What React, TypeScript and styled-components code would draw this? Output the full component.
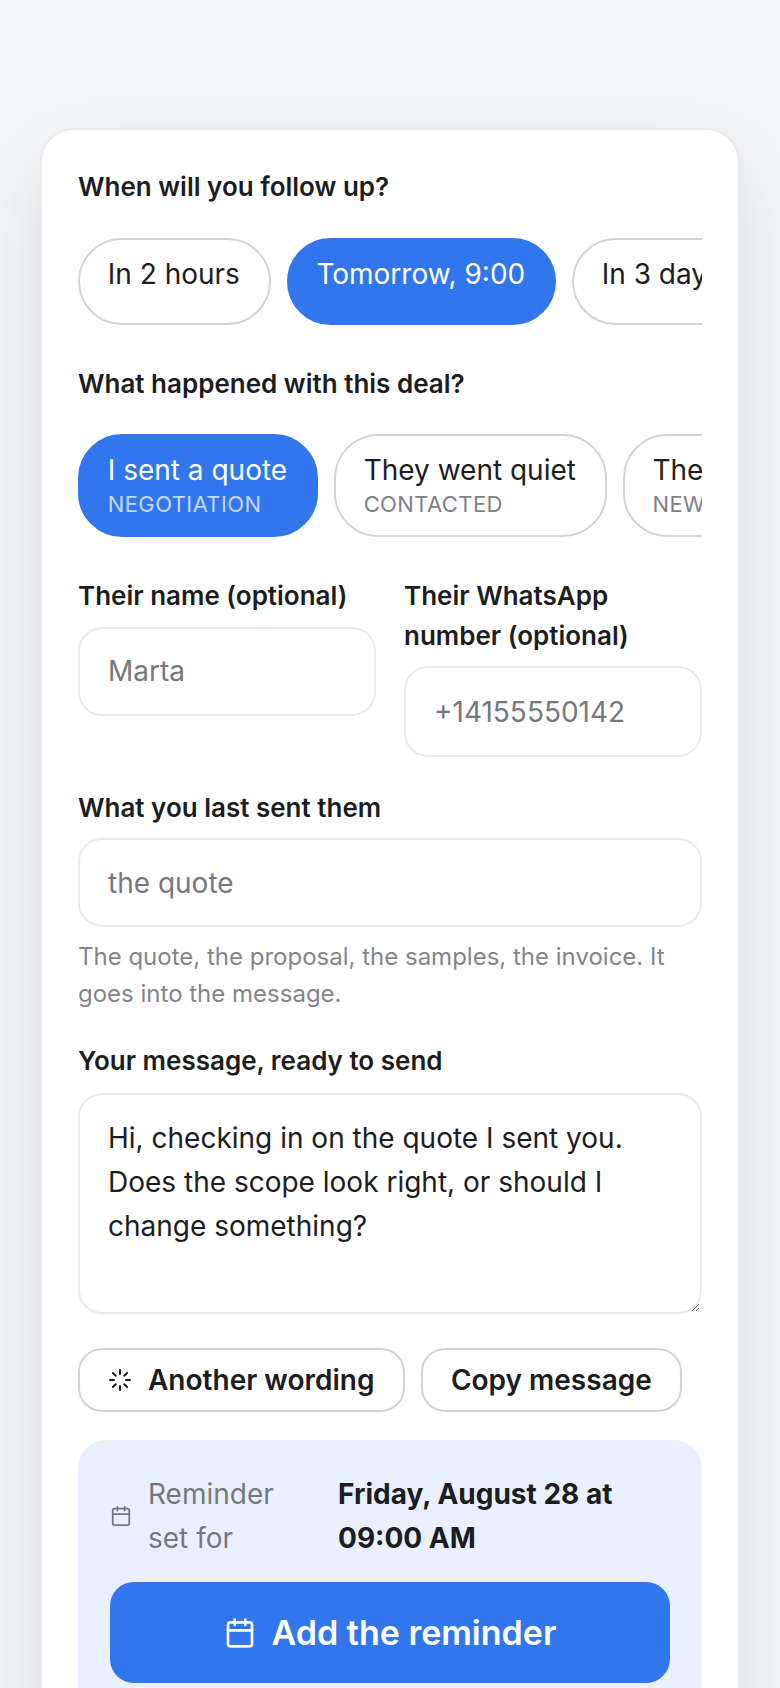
import React from "react";
import styled, { createGlobalStyle } from "styled-components";

const Global = createGlobalStyle`
  html, body { margin: 0; padding: 0; }
  body {
    height: 1688px; overflow: hidden;
    background: #f6f7f9;
    font-family: Inter, "Liberation Sans", sans-serif;
    color: #1c1d20;
    -webkit-font-smoothing: antialiased;
  }
  * { box-sizing: border-box; }
`;

const Page = styled.main`
  height: 1688px;
  overflow: hidden;
  padding: 128px 40px 0;
`;

const Card = styled.section`
  background: #fff;
  border: 2px solid #e9eaee;
  border-radius: 34px;
  padding: 37px 36px 0;
  height: 1700px;
  box-shadow: 0 32px 80px rgba(28, 29, 32, 0.14);
`;

const Field = styled.div`
  display: flex;
  flex-direction: column;
  min-width: 0;
`;

const Label = styled.label`
  font-size: 26px;
  font-weight: 600;
  line-height: 39.5px;
  color: #1c1d20;
  margin-bottom: 11px;
`;

const Chips = styled.div`
  display: flex;
  gap: 16px;
  overflow: hidden;
  margin: 20px 0 39px;
`;

const Chip = styled.button<{ $on?: boolean }>`
  flex: none;
  display: flex;
  flex-direction: column;
  align-items: flex-start;
  min-height: 87px;
  padding: 15px 28.75px 16px 27.75px;
  border-radius: 44px;
  border: 2px solid ${(p) => (p.$on ? "#3276ee" : "#d2d3d8")};
  background: ${(p) => (p.$on ? "#3276ee" : "#fff")};
  color: ${(p) => (p.$on ? "#fff" : "#1c1d20")};
  font: 400 28px/39px Inter, sans-serif;
`;

const ChipSub = styled.span<{ $on?: boolean }>`
  font-size: 22px;
  line-height: 29px;
  letter-spacing: 0.4px;
  color: ${(p) => (p.$on ? "rgba(255,255,255,0.72)" : "#808186")};
`;

const TwoCols = styled.div`
  display: grid;
  grid-template-columns: 1fr 1fr;
  gap: 28px;
  align-items: start;
  margin-bottom: 30.5px;
`;

const Input = styled.input<{ $tall?: boolean }>`
  width: 100%;
  height: ${(p) => (p.$tall ? "91px" : "89px")};
  padding: 0 28px;
  border: 2px solid #e9eaee;
  border-radius: 24px;
  background: #fff;
  font: 400 28px Inter, sans-serif;
  color: #1c1d20;
  outline: none;
  &::placeholder { color: #77787d; opacity: 1; }
`;

const Hint = styled.p`
  margin: 11px 0 29px;
  font-size: 24px;
  line-height: 37px;
  color: #84858a;
`;

const Message = styled.textarea`
  display: block;
  width: 100%;
  height: 221px;
  margin-top: 1.5px;
  padding: 20.5px 28px;
  border: 2px solid #e9eaee;
  border-radius: 24px;
  background: #fff;
  font: 400 28px/44px Inter, sans-serif;
  color: #1c1d20;
  outline: none;
`;

const Actions = styled.div`
  display: flex;
  gap: 16px;
  margin: 34px 0 28px;
`;

const Ghost = styled.button`
  display: flex;
  align-items: center;
  gap: 16px;
  height: 64px;
  padding: 0 28.5px 0 28px;
  border: 2px solid #d2d3d8;
  border-radius: 24px;
  background: #fff;
  color: #1c1d20;
  font: 600 28px Inter, sans-serif;
`;

const Panel = styled.div`
  background: #e9f0fd;
  border-radius: 28px;
  padding: 32px;
  height: 400px;
`;

const Summary = styled.div`
  display: flex;
  align-items: center;
  margin-bottom: 22px;
`;

const SummaryIcon = styled.svg`
  flex: none;
  width: 22px;
  height: 22px;
  margin-right: 16px;
  color: #77787d;
`;

const SummaryLabel = styled.span`
  flex: none;
  width: 190px;
  font-size: 28px;
  line-height: 44px;
  color: #77787d;
`;

const SummaryValue = styled.strong`
  font-size: 28px;
  line-height: 44px;
  font-weight: 700;
  color: #1c1d20;
`;

const Primary = styled.button`
  width: 100%;
  height: 101px;
  display: flex;
  align-items: center;
  justify-content: center;
  gap: 16px;
  border: 0;
  border-radius: 24px;
  background: #3276ee;
  color: #fff;
  font: 600 34px Inter, sans-serif;
`;

const Calendar = ({ as: _a, ...p }: any) => (
  <svg viewBox="0 0 24 24" fill="none" stroke="currentColor" strokeWidth="2" strokeLinecap="round" strokeLinejoin="round" {...p}>
    <path d="M8 2v4M16 2v4" />
    <rect x="3" y="4" width="18" height="18" rx="2" />
    <path d="M3 10h18" />
  </svg>
);

const Spinner = () => (
  <svg width="24" height="24" viewBox="0 0 24 24" fill="none" stroke="currentColor" strokeWidth="2" strokeLinecap="round">
    <path d="M12 2v4M12 18v4M4.93 4.93l2.83 2.83M16.24 16.24l2.83 2.83M2 12h4M18 12h4M4.93 19.07l2.83-2.83M16.24 7.76l2.83-2.83" />
  </svg>
);

export default function App() {
  return (
    <>
      <Global />
      <Page>
        <Card>
          <Field>
            <Label>When will you follow up?</Label>
            <Chips>
              <Chip>In 2 hours</Chip>
              <Chip $on>Tomorrow, 9:00</Chip>
              <Chip>In 3 days</Chip>
              <Chip>Next week</Chip>
            </Chips>
          </Field>
          <Field>
            <Label>What happened with this deal?</Label>
            <Chips>
              <Chip $on>I sent a quote<ChipSub $on>NEGOTIATION</ChipSub></Chip>
              <Chip>They went quiet<ChipSub>CONTACTED</ChipSub></Chip>
              <Chip>They asked for a price<ChipSub>NEW</ChipSub></Chip>
            </Chips>
          </Field>
          <TwoCols>
            <Field>
              <Label>Their name (optional)</Label>
              <Input placeholder="Marta" />
            </Field>
            <Field>
              <Label>Their WhatsApp number (optional)</Label>
              <Input $tall placeholder="+14155550142" />
            </Field>
          </TwoCols>
          <Field>
            <Label>What you last sent them</Label>
            <Input placeholder="the quote" />
            <Hint>The quote, the proposal, the samples, the invoice. It goes into the message.</Hint>
          </Field>
          <Field>
            <Label>Your message, ready to send</Label>
            <Message defaultValue={"Hi, checking in on the quote I sent you. Does the scope look right, or should I change something?"} />
          </Field>
          <Actions>
            <Ghost><Spinner />Another wording</Ghost>
            <Ghost>Copy message</Ghost>
          </Actions>
          <Panel>
            <Summary>
              <SummaryIcon as={Calendar} />
              <SummaryLabel>Reminder<br />set for</SummaryLabel>
              <SummaryValue>Friday, August 28 at 09:00 AM</SummaryValue>
            </Summary>
            <Primary><Calendar width="32" height="32" />Add the reminder</Primary>
          </Panel>
        </Card>
      </Page>
    </>
  );
}
